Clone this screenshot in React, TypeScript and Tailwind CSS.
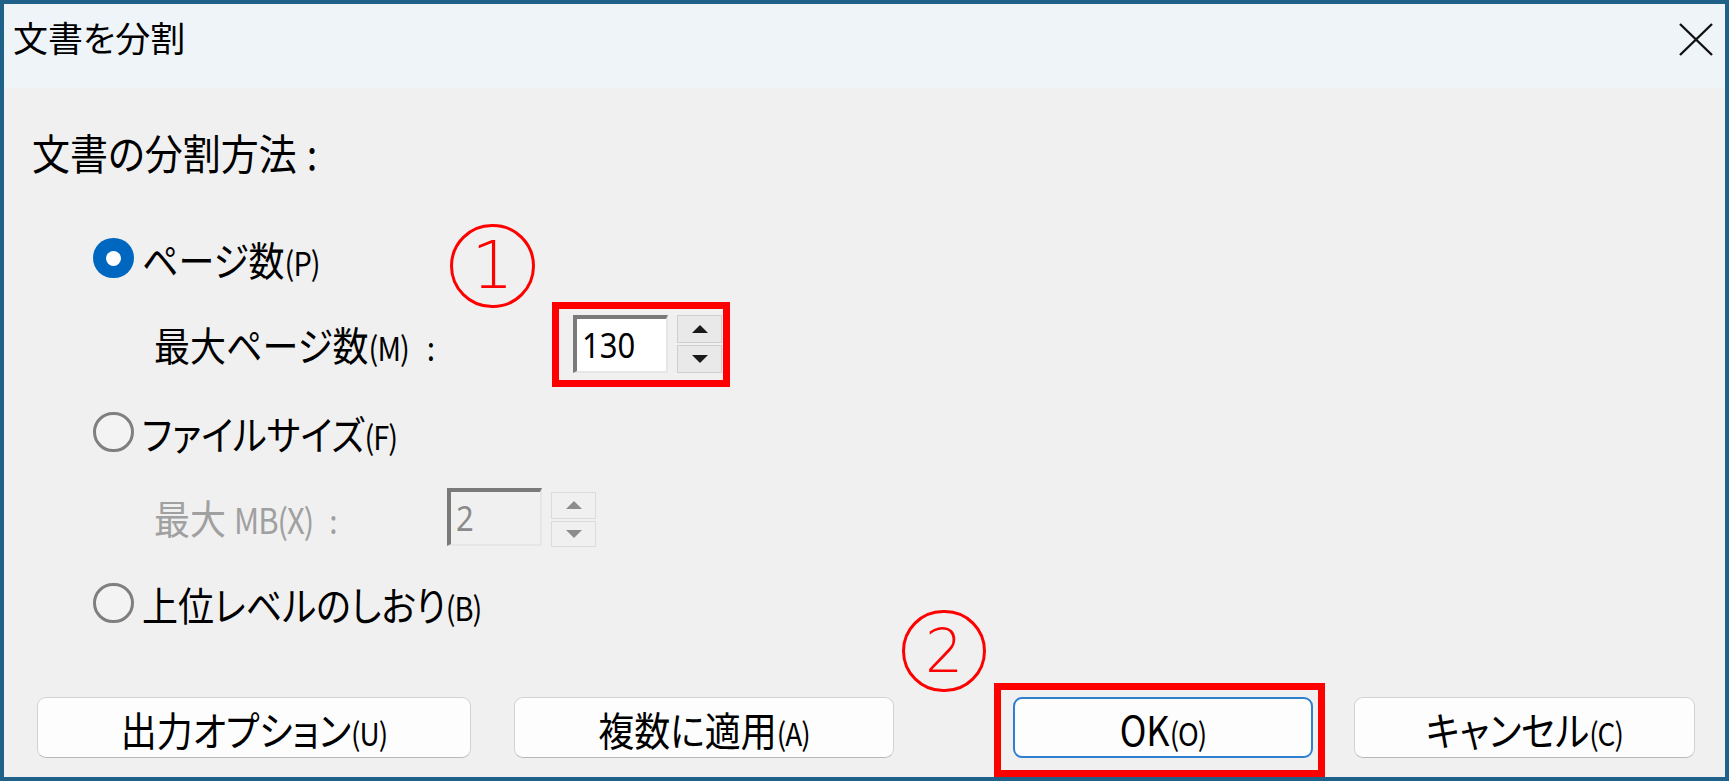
import React from 'react';

const jp = "font-['Noto_Sans_CJK_JP',sans-serif] [font-feature-settings:'palt']";

function Txt({ children, className = '' }: { children: React.ReactNode; className?: string }) {
  return <span className={`inline-block leading-none scale-y-[1.12] whitespace-nowrap ${className}`}>{children}</span>;
}

function Radio({ checked }: { checked?: boolean }) {
  if (checked) {
    return (
      <span className="w-[41px] h-[40px] rounded-full bg-[#0067c0] flex items-center justify-center shrink-0">
        <span className="w-[15px] h-[15px] rounded-full bg-white" />
      </span>
    );
  }
  return <span className="w-[41px] h-[40px] rounded-full border-[3px] border-[#7f7f7f] bg-[#f3f3f3] shrink-0" />;
}

function Arrow({ up, color }: { up?: boolean; color: string }) {
  return (
    <svg width="16" height="8" viewBox="0 0 16 8">
      <polygon points={up ? '8,0 16,8 0,8' : '0,0 16,0 8,8'} fill={color} />
    </svg>
  );
}

function SpinBox({ value, disabled }: { value: string; disabled?: boolean }) {
  const arrow = disabled ? '#8c8c8c' : '#1a1a1a';
  const btn = disabled ? 'border-[#dcdcdc] bg-[#f0f0f0]' : 'border-[#cfcfcf] bg-[#e9e9e9]';
  return (
    <div className="flex items-start gap-[9px]">
      <div
        className={`w-[95px] h-[58px] border-t-[4px] border-l-[4px] border-r-[2px] border-b-[2px] border-t-[#7a7a7a] border-l-[#7a7a7a] border-r-[#e6e6e6] border-b-[#e6e6e6] flex items-center pl-[5px] ${
          disabled ? 'bg-[#f0f0f0] text-[#8a8a8a]' : 'bg-white text-black'
        }`}
      >
        <Txt className="text-[31px] font-['Noto_Sans',sans-serif]">{value}</Txt>
      </div>
      <div className={`w-[45px] flex flex-col gap-[2px] ${disabled ? 'h-[55px] mt-[4px]' : 'h-[58px]'}`}>
        <div className={`flex-1 flex items-center justify-center border ${btn}`}>
          <Arrow up color={arrow} />
        </div>
        <div className={`flex-1 flex items-center justify-center border ${btn}`}>
          <Arrow color={arrow} />
        </div>
      </div>
    </div>
  );
}

function Label({ jpText, key2, colon }: { jpText: string; key2: string; colon?: boolean }) {
  return (
    <Txt className="text-[36px] text-black">
      {jpText}
      <span className="text-[29px] tracking-[-1px]">{key2}</span>
      {colon && <span className="text-[30px] ml-[18px]">:</span>}
    </Txt>
  );
}

function DlgButton({ label, hot, width, primary }: { label: string; hot: string; width: string; primary?: boolean }) {
  return (
    <div
      className={`${width} h-[61px] rounded-[9px] bg-[#fdfdfd] flex items-center justify-center ${
        primary ? 'border-2 border-[#2f7fd1]' : 'border border-[#d2d2d2] border-b-[#b9b9b9]'
      }`}
    >
      <Txt className="text-[36px] text-black">
        {label}
        <span className="text-[28px] tracking-[-1px]">{hot}</span>
      </Txt>
    </div>
  );
}

export default function App() {
  return (
    <div className={`w-[1729px] h-[781px] border-4 border-[#1f6189] bg-[#f0f0f0] flex flex-col relative overflow-hidden ${jp}`}>
      {/* Title bar */}
      <div className="h-[84px] bg-[#eff4f9] flex items-start justify-between pl-[9px] pr-[12px] pt-[15px] shrink-0">
        <span className="text-[35px] leading-none text-black">文書を分割</span>
        <svg width="34" height="33" viewBox="0 0 34 33" className="mt-[4px]">
          <path d="M1 1 L33 32 M33 1 L1 32" stroke="#111" strokeWidth="2.4" fill="none" />
        </svg>
      </div>

      {/* Body */}
      <div className="flex flex-col pl-[28px]">
        <div className="mt-[44px] h-[40px] flex items-center">
          <Txt className="text-[38px] text-black">
            文書の分割方法<span className="ml-[10px]">:</span>
          </Txt>
        </div>

        <div className="mt-[66px] h-[40px] flex items-center ml-[61px] gap-[8px]">
          <Radio checked />
          <Label jpText="ページ数" key2="(P)" />
        </div>

        <div className="mt-[24px] h-[85px] flex items-center ml-[122px]">
          <div className="w-[398px]">
            <Label jpText="最大ページ数" key2="(M)" colon />
          </div>
          <div className="border-[7px] border-[#ff0000] pl-[14px] pr-[1px] pt-[6px] pb-[7px]">
            <SpinBox value="130" />
          </div>
        </div>

        <div className="mt-[25px] h-[40px] flex items-center ml-[61px] gap-[8px]">
          <Radio />
          <Label jpText="ファイルサイズ" key2="(F)" />
        </div>

        <div className="mt-[36px] h-[59px] flex items-center ml-[122px]">
          <div className="w-[293px]">
            <Txt className="text-[36px] text-[#a0a0a0]">
              最大 <span className="text-[31px] tracking-[-1px]">MB(X)</span>
              <span className="text-[30px] ml-[16px]">:</span>
            </Txt>
          </div>
          <SpinBox value="2" disabled />
        </div>

        <div className="mt-[36px] h-[40px] flex items-center ml-[61px] gap-[8px]">
          <Radio />
          <Label jpText="上位レベルのしおり" key2="(B)" />
        </div>

        <div className="mt-[74px] flex items-center ml-[5px]">
          <DlgButton label="出力オプション" hot="(U)" width="w-[434px]" />
          <div className="w-[43px]" />
          <DlgButton label="複数に適用" hot="(A)" width="w-[380px]" />
          <div className="w-[119px]" />
          <DlgButton label="OK" hot="(O)" width="w-[300px]" primary />
          <div className="w-[41px]" />
          <DlgButton label="キャンセル" hot="(C)" width="w-[341px]" />
        </div>
      </div>

      {/* Annotations */}
      <div className="absolute left-[446px] top-[220px] w-[85px] h-[84px] rounded-full border-[3px] border-[#ff0000] flex items-center justify-center">
        <span className="font-['DejaVu_Sans',sans-serif] font-extralight text-[66px] leading-none text-[#ff0000]">1</span>
      </div>
      <div className="absolute left-[898px] top-[606px] w-[84px] h-[82px] rounded-full border-[3px] border-[#ff0000] flex items-center justify-center">
        <span className="font-['DejaVu_Sans',sans-serif] font-extralight text-[60px] leading-none text-[#ff0000]">2</span>
      </div>
      <div className="absolute left-[990px] top-[679px] w-[331px] h-[94px] border-[7px] border-[#ff0000]" />
    </div>
  );
}
